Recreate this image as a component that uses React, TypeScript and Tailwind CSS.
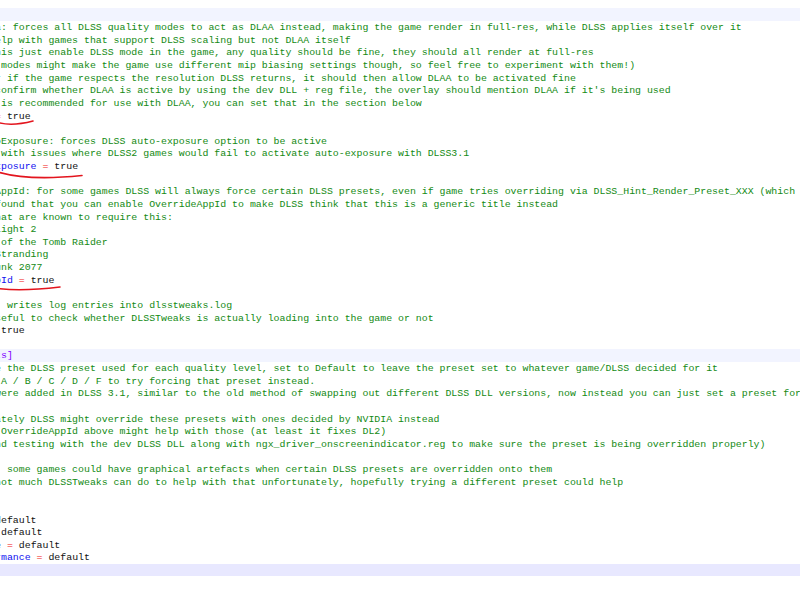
import React from "react";

type Seg = { s: string; c: string };
type Line = { segs: Seg[]; bg?: string };

const G = "text-[#138a13]";
const B = "text-[#1010f0]";
const R = "text-[#f01010]";
const K = "text-[#111111]";
const P = "text-[#8000ff]";

const SECTION_BG = "bg-[#f2f4ff]";
const CURRENT_BG = "bg-[#e8e8ff]";

const c = (s: string): Line => ({ segs: [{ s, c: G }] });
const blank: Line = { segs: [] };
const kv = (key: string, val: string): Line => ({
  segs: [
    { s: key, c: B },
    { s: key ? " " : "", c: K },
    { s: "=", c: R },
    { s: " " + val, c: K },
  ],
});

// each string starts at the first (half-visible) column of the editor view
const lines: Line[] = [
  { segs: [{ s: "]", c: P }], bg: SECTION_BG },
  c("a: forces all DLSS quality modes to act as DLAA instead, making the game render in full-res, while DLSS applies itself over it"),
  c("elp with games that support DLSS scaling but not DLAA itself"),
  c("his just enable DLSS mode in the game, any quality should be fine, they should all render at full-res"),
  c(" modes might make the game use different mip biasing settings though, so feel free to experiment with them!)"),
  c("r if the game respects the resolution DLSS returns, it should then allow DLAA to be activated fine"),
  c("confirm whether DLAA is active by using the dev DLL + reg file, the overlay should mention DLAA if it's being used"),
  c(" is recommended for use with DLAA, you can set that in the section below"),
  kv("", "true"),
  blank,
  c("oExposure: forces DLSS auto-exposure option to be active"),
  c(" with issues where DLSS2 games would fail to activate auto-exposure with DLSS3.1"),
  kv("xposure", "true"),
  blank,
  c("AppId: for some games DLSS will always force certain DLSS presets, even if game tries overriding via DLSS_Hint_Render_Preset_XXX (which DLSSTweaks uses)"),
  c("found that you can enable OverrideAppId to make DLSS think that this is a generic title instead"),
  c("hat are known to require this:"),
  c("Light 2"),
  c(" of the Tomb Raider"),
  c("Stranding"),
  c("unk 2077"),
  kv("pId", "true"),
  blank,
  c(": writes log entries into dlsstweaks.log"),
  c("seful to check whether DLSSTweaks is actually loading into the game or not"),
  { segs: [{ s: " true", c: K }] },
  blank,
  { segs: [{ s: "ts]", c: P }], bg: SECTION_BG },
  c("e the DLSS preset used for each quality level, set to Default to leave the preset set to whatever game/DLSS decided for it"),
  c(" A / B / C / D / F to try forcing that preset instead."),
  c("were added in DLSS 3.1, similar to the old method of swapping out different DLSS DLL versions, now instead you can just set a preset for it)"),
  blank,
  c("ately DLSS might override these presets with ones decided by NVIDIA instead"),
  c(" OverrideAppId above might help with those (at least it fixes DL2)"),
  c("nd testing with the dev DLSS DLL along with ngx_driver_onscreenindicator.reg to make sure the preset is being overridden properly)"),
  blank,
  c(": some games could have graphical artefacts when certain DLSS presets are overridden onto them"),
  c("not much DLSSTweaks can do to help with that unfortunately, hopefully trying a different preset could help"),
  blank,
  blank,
  { segs: [{ s: "default", c: K }] },
  { segs: [{ s: " default", c: K }] },
  kv("e", "default"),
  kv("rmance", "default"),
  { segs: [], bg: CURRENT_BG },
];

const EditorLine: React.FC<{ line: Line }> = ({ line }) => (
  <div className={`h-[12.63px] overflow-hidden whitespace-pre ${line.bg ?? ""}`}>
    <span className="relative top-[1.5px] ml-[-4.94px]">
      {line.segs.map((seg, i) => (
        <span key={i} className={seg.c}>
          {seg.s}
        </span>
      ))}
    </span>
  </div>
);

export default function App() {
  return (
    <div className="relative w-[800px] h-[600px] overflow-hidden bg-white font-['Liberation_Mono',monospace] text-[9.9px] leading-[12.63px]">
      <div className="pt-[8px]">
        {lines.map((line, i) => (
          <EditorLine key={i} line={line} />
        ))}
      </div>

      {/* red pen marks under the edited values */}
      <svg className="absolute inset-0 pointer-events-none" width="800" height="600" viewBox="0 0 800 600">
        <g fill="none" stroke="#e3151e" strokeWidth="1.6" strokeLinecap="round">
          <path d="M -2 122.5 Q 12 126.5 33 121" />
          <path d="M -2 172 Q 28 181 82 175.5" />
          <path d="M -2 288.5 Q 22 291.5 60 287" />
        </g>
      </svg>
    </div>
  );
}
